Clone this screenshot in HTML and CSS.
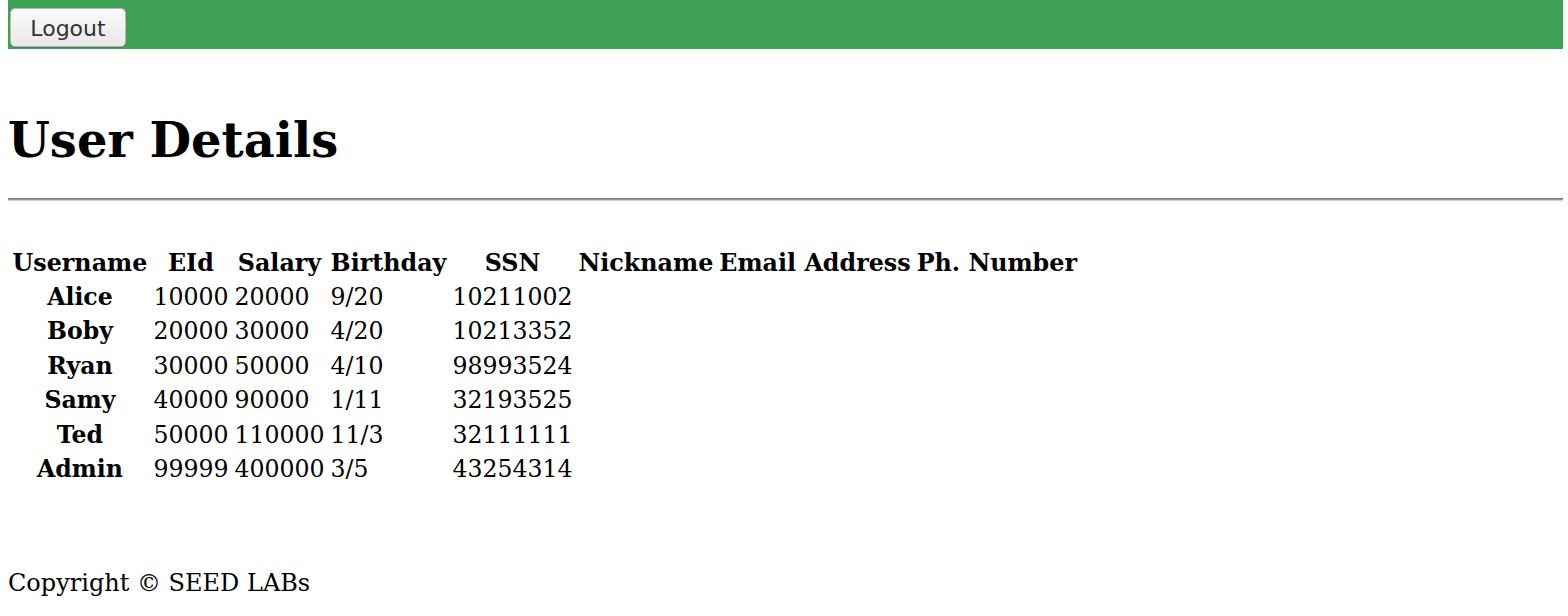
FILE: index.html
```html
<!DOCTYPE html>
<html>
<head>
<meta charset="utf-8">
<title>User Details</title>
<link rel="stylesheet" href="styles.css">
</head>
<body>
<nav class="navbar">
  <button class="logout-btn" type="button">Logout</button>
</nav>
<h1 class="title">User Details</h1>
<hr class="rule">
<table class="users">
  <thead>
    <tr>
      <th>Username</th><th>EId</th><th>Salary</th><th>Birthday</th><th>SSN</th><th>Nickname</th><th>Email Address</th><th>Ph. Number</th>
    </tr>
  </thead>
  <tbody>
    <tr><th>Alice</th><td>10000</td><td>20000</td><td>9/20</td><td>10211002</td><td></td><td></td><td></td></tr>
    <tr><th>Boby</th><td>20000</td><td>30000</td><td>4/20</td><td>10213352</td><td></td><td></td><td></td></tr>
    <tr><th>Ryan</th><td>30000</td><td>50000</td><td>4/10</td><td>98993524</td><td></td><td></td><td></td></tr>
    <tr><th>Samy</th><td>40000</td><td>90000</td><td>1/11</td><td>32193525</td><td></td><td></td><td></td></tr>
    <tr><th>Ted</th><td>50000</td><td>110000</td><td>11/3</td><td>32111111</td><td></td><td></td><td></td></tr>
    <tr><th>Admin</th><td>99999</td><td>400000</td><td>3/5</td><td>43254314</td><td></td><td></td><td></td></tr>
  </tbody>
</table>
<footer class="footer">Copyright &copy; SEED LABs</footer>
</body>
</html>
```

FILE: styles.css
```css
html, body {
  background: #ffffff;
}
body {
  margin: 0 5px 0 8px;
  font-family: "DejaVu Serif", serif;
  font-size: 24px;
  color: #000;
}
.navbar {
  background: #3ea055;
  height: 49px;
  display: flex;
  align-items: flex-start;
  padding: 8px 0 0 2px;
  box-sizing: border-box;
}
.logout-btn {
  width: 116px;
  height: 39px;
  font-family: "DejaVu Sans", sans-serif;
  font-size: 22px;
  color: #333;
  background: linear-gradient(#fafafa, #e8e8e8);
  border: 1px solid #b8b8b8;
  border-radius: 5px;
  padding: 2px 0 0;
  box-shadow: 0 1px 1px rgba(0,0,0,0.15);
}
.title {
  font-size: 48px;
  font-weight: bold;
  margin: 63px 0 0;
  line-height: normal;
}
.rule {
  margin: 30px 0 0;
  border: 0;
  border-top: 1px solid #777;
  border-bottom: 1px solid #ccc;
  height: 1px;
  background: #999;
}
.users {
  margin-top: 43px;
  border-spacing: 3px;
  font-size: 23.6px;
}
.users th, .users td {
  padding: 1.5px;
  line-height: 28.4px;
}
.users th {
  font-weight: bold;
  text-align: center;
}
.users thead th {
  font-size: 23.8px;
}
.users td {
  text-align: left;
}
.footer {
  margin-top: 81px;
  font-size: 24px;
}
```
